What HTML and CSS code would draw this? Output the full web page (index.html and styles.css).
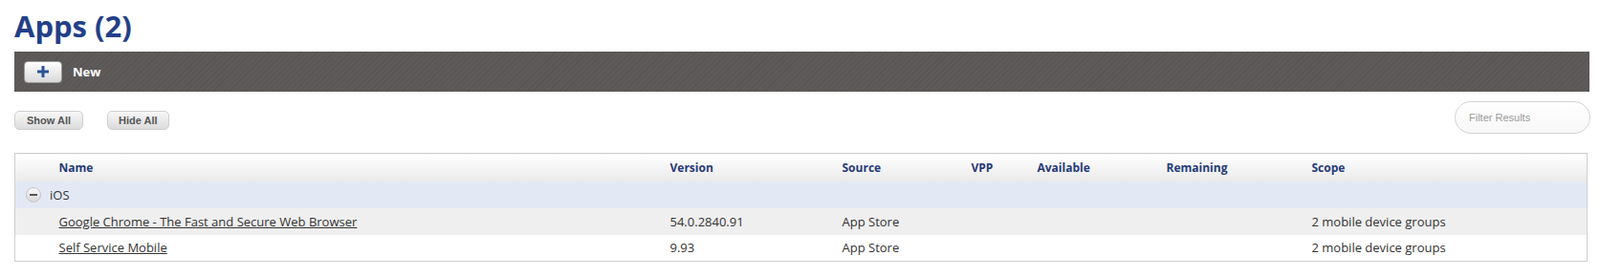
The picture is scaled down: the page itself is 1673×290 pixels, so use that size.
FILE: index.html
```html
<!DOCTYPE html>
<html lang="en">
<head>
    <meta charset="UTF-8">
    <title>Apps</title>
    <link rel="stylesheet" href="styles.css">
</head>
<body>
    <div class="page">
        <h1 class="page-title">Apps (2)</h1>

        <div class="action-bar">
            <button class="btn-new" type="button">
                <svg width="14" height="14" viewBox="0 0 14 14">
                    <path d="M7 1v12M1 7h12" stroke="#2b5598" stroke-width="3"/>
                </svg>
            </button>
            <span class="action-label">New</span>
        </div>

        <div class="toolbar">
            <div class="toolbar-left">
                <button class="btn-small" type="button">Show All</button>
                <button class="btn-small" type="button">Hide All</button>
            </div>
            <input class="filter" type="text" placeholder="Filter Results">
        </div>

        <table class="apps-table">
            <colgroup>
                <col class="c-spacer">
                <col class="c-name">
                <col class="c-version">
                <col class="c-source">
                <col class="c-vpp">
                <col class="c-available">
                <col class="c-remaining">
                <col>
            </colgroup>
            <thead>
                <tr>
                    <th></th>
                    <th>Name</th>
                    <th>Version</th>
                    <th>Source</th>
                    <th>VPP</th>
                    <th>Available</th>
                    <th>Remaining</th>
                    <th>Scope</th>
                </tr>
            </thead>
            <tbody>
                <tr class="group-row">
                    <td colspan="8">
                        <div class="group-label">
                            <span class="toggle"><span class="toggle-bar"></span></span>
                            <span>iOS</span>
                        </div>
                    </td>
                </tr>
                <tr class="row-alt">
                    <td></td>
                    <td><a href="#">Google Chrome - The Fast and Secure Web Browser</a></td>
                    <td>54.0.2840.91</td>
                    <td>App Store</td>
                    <td></td>
                    <td></td>
                    <td></td>
                    <td>2 mobile device groups</td>
                </tr>
                <tr>
                    <td></td>
                    <td><a href="#">Self Service Mobile</a></td>
                    <td>9.93</td>
                    <td>App Store</td>
                    <td></td>
                    <td></td>
                    <td></td>
                    <td>2 mobile device groups</td>
                </tr>
            </tbody>
        </table>
    </div>
</body>
</html>
```

FILE: styles.css
```css
:root {
    --title: #233f87;
    --head-text: #253a78;
    --text: #333333;
    --bar: #5e5a5a;
    --border: #cfcfcf;
}

* {
    box-sizing: border-box;
    margin: 0;
    padding: 0;
}

body {
    font-family: 'Open Sans', sans-serif;
    color: var(--text);
    background: #ffffff;
}

.page {
    margin: 0 11px 0 15px;
}

.page-title {
    font-size: 31px;
    font-weight: 700;
    line-height: 42px;
    color: var(--title);
    padding-top: 6px;
    height: 54px;
}

/* Barre d'actions */
.action-bar {
    height: 42px;
    display: flex;
    align-items: center;
    padding-left: 10px;
    background-color: var(--bar);
    background-image: repeating-linear-gradient(135deg, rgba(0, 0, 0, 0.06) 0 1px, transparent 1px 4px);
}

.btn-new {
    width: 40px;
    height: 23px;
    border: 1px solid #9a9a9a;
    border-radius: 4px;
    background: linear-gradient(#ffffff, #d9d9d9);
    display: flex;
    justify-content: center;
    align-items: center;
    cursor: pointer;
}

.action-label {
    margin-left: 11px;
    color: #ffffff;
    font-size: 13px;
    font-weight: 700;
}

/* Boutons + filtre */
.toolbar {
    height: 64px;
    display: flex;
    justify-content: space-between;
    align-items: flex-start;
}

.toolbar-left {
    display: flex;
    gap: 25px;
    margin-top: 20px;
}

.btn-small {
    height: 20px;
    padding: 0 12px;
    font-family: 'Liberation Sans', sans-serif;
    font-size: 11px;
    font-weight: 700;
    color: #555555;
    border: 1px solid #d0d0d0;
    border-radius: 5px;
    background: linear-gradient(#f7f7f7, #dcdcdc);
    cursor: pointer;
}

.btn-small + .btn-small {
    padding: 0 11px;
}

.filter {
    width: 142px;
    height: 34px;
    margin-top: 10px;
    margin-right: -1px;
    padding: 0 14px;
    border: 1px solid #d4d4d4;
    border-radius: 17px;
    background: linear-gradient(#ffffff, #f7f7f7);
    font-family: 'Liberation Sans', sans-serif;
    font-size: 11px;
    outline: none;
}

.filter::placeholder {
    color: #9a9a9a;
}

/* Tableau */
.apps-table {
    width: calc(100% - 2px);
    border-collapse: collapse;
    table-layout: fixed;
    border: 1px solid var(--border);
    font-size: 13px;
}

.c-spacer { width: 46px; }
.c-name { width: 639px; }
.c-version { width: 180px; }
.c-source { width: 135px; }
.c-vpp { width: 69px; }
.c-available { width: 135px; }
.c-remaining { width: 152px; }

.apps-table th {
    height: 29px;
    text-align: left;
    font-size: 12px;
    font-weight: 700;
    color: var(--head-text);
    background: linear-gradient(#ffffff, #e9e9e9);
}

.apps-table td {
    height: 28px;
    white-space: nowrap;
}

.apps-table a {
    color: var(--text);
}

.group-row td {
    background: #e3e9f4;
    padding-left: 11px;
}

.group-label {
    display: flex;
    align-items: center;
    gap: 9px;
}

.toggle {
    display: flex;
    justify-content: center;
    align-items: center;
    width: 16px;
    height: 16px;
    border: 1px solid #c4c4c4;
    border-radius: 50%;
    background: linear-gradient(#fafafa, #d8d8d8);
}

.toggle-bar {
    width: 8px;
    height: 2px;
    background: #555555;
}

.row-alt td {
    background: #efefef;
}
```
